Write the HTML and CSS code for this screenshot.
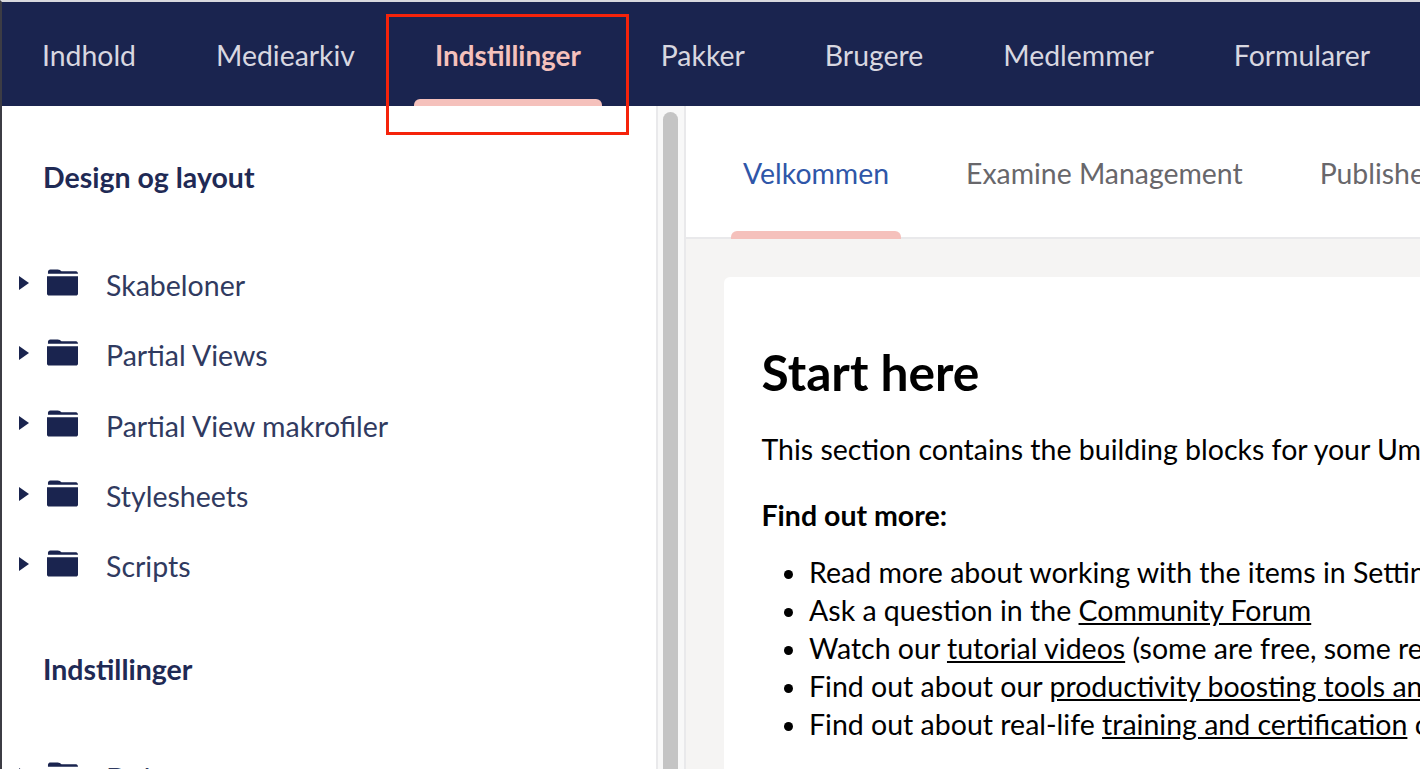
FILE: index.html
```html
<!DOCTYPE html>
<html lang="da">
<head>
<meta charset="utf-8">
<title>Indstillinger</title>
<link rel="stylesheet" href="styles.css">
</head>
<body>
<div class="app">
  <nav class="topnav">
    <a class="nav-item">Indhold</a>
    <a class="nav-item">Mediearkiv</a>
    <a class="nav-item active">Indstillinger</a>
    <a class="nav-item">Pakker</a>
    <a class="nav-item">Brugere</a>
    <a class="nav-item">Medlemmer</a>
    <a class="nav-item">Formularer</a>
  </nav>
  <div class="main">
    <aside class="sidebar">
      <h2 class="tree-title first">Design og layout</h2>
      <ul class="tree">
        <li class="tree-row"><svg class="caret" viewBox="0 0 10 14"><path d="M0 0 10 7 0 14z"/></svg><svg class="folder" viewBox="0 0 32 27"><path d="M1 4V2.500C1 1 2 0 3.500 0H11C13 0 14 1 15 2H30C31 2 32 3 32 4.500H1Z"/><path d="M0 7H32V25C32 26 31 27 30 27H2C1 27 0 26 0 25Z"/></svg><span>Skabeloner</span></li>
        <li class="tree-row"><svg class="caret" viewBox="0 0 10 14"><path d="M0 0 10 7 0 14z"/></svg><svg class="folder" viewBox="0 0 32 27"><path d="M1 4V2.500C1 1 2 0 3.500 0H11C13 0 14 1 15 2H30C31 2 32 3 32 4.500H1Z"/><path d="M0 7H32V25C32 26 31 27 30 27H2C1 27 0 26 0 25Z"/></svg><span>Partial Views</span></li>
        <li class="tree-row"><svg class="caret" viewBox="0 0 10 14"><path d="M0 0 10 7 0 14z"/></svg><svg class="folder" viewBox="0 0 32 27"><path d="M1 4V2.500C1 1 2 0 3.500 0H11C13 0 14 1 15 2H30C31 2 32 3 32 4.500H1Z"/><path d="M0 7H32V25C32 26 31 27 30 27H2C1 27 0 26 0 25Z"/></svg><span>Partial View makrofiler</span></li>
        <li class="tree-row"><svg class="caret" viewBox="0 0 10 14"><path d="M0 0 10 7 0 14z"/></svg><svg class="folder" viewBox="0 0 32 27"><path d="M1 4V2.500C1 1 2 0 3.500 0H11C13 0 14 1 15 2H30C31 2 32 3 32 4.500H1Z"/><path d="M0 7H32V25C32 26 31 27 30 27H2C1 27 0 26 0 25Z"/></svg><span>Stylesheets</span></li>
        <li class="tree-row"><svg class="caret" viewBox="0 0 10 14"><path d="M0 0 10 7 0 14z"/></svg><svg class="folder" viewBox="0 0 32 27"><path d="M1 4V2.500C1 1 2 0 3.500 0H11C13 0 14 1 15 2H30C31 2 32 3 32 4.500H1Z"/><path d="M0 7H32V25C32 26 31 27 30 27H2C1 27 0 26 0 25Z"/></svg><span>Scripts</span></li>
      </ul>
      <h2 class="tree-title second">Indstillinger</h2>
      <ul class="tree">
        <li class="tree-row"><svg class="caret" viewBox="0 0 10 14"><path d="M0 0 10 7 0 14z"/></svg><svg class="folder" viewBox="0 0 32 27"><path d="M1 4V2.500C1 1 2 0 3.500 0H11C13 0 14 1 15 2H30C31 2 32 3 32 4.500H1Z"/><path d="M0 7H32V25C32 26 31 27 30 27H2C1 27 0 26 0 25Z"/></svg><span>Dokumenttyper</span></li>
      </ul>
    </aside>
    <div class="scrolltrack"><div class="scrollthumb"></div></div>
    <section class="content">
      <div class="tabs">
        <a class="tab active">Velkommen</a>
        <a class="tab">Examine Management</a>
        <a class="tab">Published Status</a>
      </div>
      <div class="panel">
        <article class="card">
          <h1>Start here</h1>
          <p class="intro">This section contains the building blocks for your Umbraco site.</p>
          <p class="more">Find out more:</p>
          <ul class="links">
            <li>Read more about working with the items in Settings in the Documentation</li>
            <li>Ask a question in the <u>Community Forum</u></li>
            <li>Watch our <u>tutorial videos</u> (some are free, some require a subscription)</li>
            <li>Find out about our <u>productivity boosting tools and commercial support</u></li>
            <li>Find out about real-life <u>training and certification</u> opportunities</li>
          </ul>
        </article>
      </div>
    </section>
  </div>
  <div class="callout"></div>
</div>
</body>
</html>
```
FILE: styles.css
```css
* { box-sizing: border-box; }
html, body { margin: 0; height: 100%; overflow: hidden; }
body { font-family: Lato, "Open Sans", sans-serif; background: #fff; }
.app { width: 1420px; height: 769px; display: flex; flex-direction: column; position: relative; overflow: hidden; border-top: 2px solid #d8d9de; border-left: 2px solid #3c3c44; }
.topnav { height: 104px; flex: none; background: #1a244f; display: flex; white-space: nowrap; }
.nav-item { position: relative; padding: 0 40px; line-height: 107px; font-size: 28.400px; color: #d8d7e0; }
.nav-item.active { color: #f5c1bc; font-weight: 700; font-size: 27.800px; }
.nav-item.active::after { content: ""; position: absolute; left: 19px; right: 19px; bottom: 0; height: 7px; background: #f5c1bc; border-radius: 6px 6px 0 0; }
.main { flex: 1; display: flex; min-height: 0; }
.sidebar { width: 654px; flex: none; padding-top: 1px; color: #1a244f; }
.tree-title { margin: 0; padding-left: 41px; font-size: 28.500px; font-weight: 700; line-height: 40px; color: #1f2a55; }
.tree-title.first { padding-top: 50px; height: 90px; margin-bottom: 53px; }
.tree-title.second { margin-top: 48px; margin-bottom: 53px; }
.tree { list-style: none; margin: 0; padding: 0; }
.tree-row { height: 70.300px; display: flex; align-items: center; padding-left: 17px; font-size: 28.500px; color: #303a60; white-space: nowrap; }
.caret { width: 10px; height: 14px; fill: #1a244f; margin-top: -5px; flex: none; }
.folder { width: 31px; height: 27px; fill: #1a244f; margin-left: 18px; margin-top: -5px; flex: none; }
.tree-row span { margin-left: 28px; }
.scrolltrack { width: 30px; flex: none; background: #f8f8f8; border-left: 2px solid #e9e9eb; border-right: 2px solid #e9e9eb; padding: 6px 6px 0 5px; }
.scrollthumb { height: 700px; background: #c4c4c4; border-radius: 8px; }
.content { flex: 1; min-width: 0; display: flex; flex-direction: column; }
.tabs { height: 133px; flex: none; background: #fff; border-bottom: 2px solid #e9e9eb; display: flex; white-space: nowrap; padding-left: 45px; }
.tab { position: relative; padding: 0 12px; margin-right: 53px; line-height: 134px; font-size: 28.400px; color: #68676b; }
.tab.active { color: #2f56a8; }
.tab.active::after { content: ""; position: absolute; left: 0; right: 0; bottom: -2px; height: 8px; background: #f5c1bc; border-radius: 6px 6px 0 0; }
.panel { flex: 1; background: #f5f4f3; padding: 38px 0 0 38px; min-height: 0; }
.card { width: 1000px; height: 700px; background: #fff; border-radius: 6px 0 0 0; padding: 65px 0 0 37.500px; color: #000; font-size: 28.500px; white-space: nowrap; }
.card h1 { margin: 0; font-size: 49.700px; font-weight: 700; line-height: 60px; }
.intro { margin: 28px 0 0; line-height: 38px; }
.more { margin: 28px 0 0; line-height: 38px; font-weight: 700; }
.links { margin: 19px 0 0; padding-left: 47.500px; line-height: 38px; }
.callout { position: absolute; left: 384px; top: 12px; width: 243px; height: 121px; border: 3px solid #f5230b; }
```
